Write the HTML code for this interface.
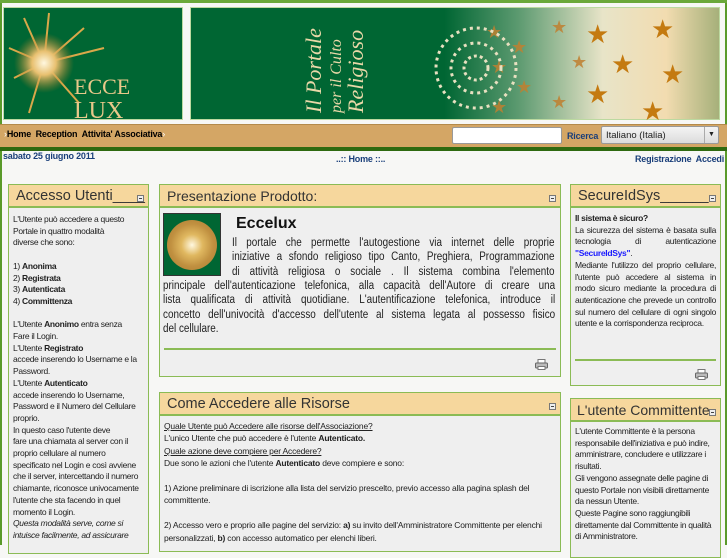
<!DOCTYPE html>
<html><head><meta charset="utf-8"><style>
*{margin:0;padding:0;box-sizing:border-box}
body{width:727px;height:545px;overflow:hidden;background:#f7f7f5;font-family:"Liberation Sans",sans-serif;position:relative}
.abs{position:absolute}
.top{left:0;top:0;width:727px;height:3px;background:#6aa83a}
.ban{background:#006633;border:1px solid #bcd9a0}
.nav{left:0;top:124px;width:727px;height:23px;background:#d4a665;border-top:1px solid #b48a4a}
.navline{left:0;top:147px;width:727px;height:4px;background:#2f6a10}
.nav b{font-size:9px;color:#1a1a1a}
.lnk{font-size:9px;font-weight:bold;color:#1a3f7a;white-space:nowrap;letter-spacing:-0.2px}
.panel{border:1px solid #8bbb55;background:#efefef;overflow:hidden}
.ph{background:#f6d79d;border-bottom:2px solid #8bbb55;height:23px;color:#333;font-size:14.5px;padding:3px 0 0 7px;position:relative;white-space:nowrap}
.mn{position:absolute;right:4px;bottom:4px;width:7px;height:7px;border:1px solid #777;background:#eee}
.mn:after{content:"";position:absolute;left:1px;top:2px;width:3px;height:1px;background:#444}
.sm{font-size:8.5px;line-height:11.7px;color:#222;letter-spacing:-0.3px}
.md{position:absolute;font-size:11.5px;line-height:14.4px;color:#222;transform:scaleX(.86);transform-origin:0 0}
.md div{text-align:justify;text-align-last:justify;white-space:nowrap}
.md div.l{text-align-last:left}
.prn{width:13px;height:11px}
</style></head><body>
<div class="abs" style="left:0;top:0;width:2px;height:545px;background:#5a9a2a"></div>
<div class="abs" style="right:0;top:0;width:2px;height:545px;background:#5a9a2a"></div>
<div class="abs top"></div>
<div class="abs ban" style="left:3px;top:7px;width:180px;height:113px">
<svg width="180" height="113" style="position:absolute;left:0;top:0">
<defs><radialGradient id="g"><stop offset="0" stop-color="#fff8e0"/><stop offset=".4" stop-color="#e8c070"/><stop offset="1" stop-color="#b07a20" stop-opacity="0"/></radialGradient></defs>
<g stroke="#d9a84a" stroke-width="2">
<line x1="40" y1="55" x2="20" y2="10"/><line x1="40" y1="55" x2="80" y2="20"/><line x1="40" y1="55" x2="100" y2="40"/><line x1="40" y1="55" x2="10" y2="70"/><line x1="40" y1="55" x2="25" y2="105"/><line x1="40" y1="55" x2="75" y2="95"/><line x1="40" y1="55" x2="45" y2="5"/><line x1="40" y1="55" x2="5" y2="40"/></g>
<circle cx="40" cy="55" r="30" fill="url(#g)"/>
<text x="70" y="86" font-family="Liberation Serif" font-size="22" fill="#e8c88a">ECCE</text>
<text x="70" y="110" font-family="Liberation Serif" font-size="24" fill="#e8c88a">LUX</text>
</svg></div>
<div class="abs ban" style="left:190px;top:7px;width:530px;height:113px;background:linear-gradient(90deg,#006633 0,#006633 48%,#5c9a70 62%,#e8e4c8 78%,#f2dcb0 90%,#a6b07a 100%)">
<svg width="530" height="113" style="position:absolute;left:0;top:0">
<g font-family="Liberation Serif" font-style="italic" fill="#e8d8a8">
<text transform="translate(130,105) rotate(-90)" font-size="22">Il Portale</text>
<text transform="translate(150,105) rotate(-90)" font-size="16">per il Culto</text>
<text transform="translate(172,105) rotate(-90)" font-size="22">Religioso</text></g>
<g fill="#c08030" opacity=".85" font-size="18">
<text x="295" y="30">★</text><text x="320" y="45">★</text><text x="300" y="65">★</text><text x="325" y="85">★</text><text x="300" y="105">★</text>
<text x="360" y="25">★</text><text x="380" y="60">★</text><text x="360" y="100">★</text></g>
<g fill="#c47a10" font-size="26"><text x="395" y="35">★</text><text x="420" y="65">★</text><text x="395" y="95">★</text><text x="460" y="30">★</text><text x="470" y="75">★</text><text x="450" y="112">★</text></g>
<circle cx="285" cy="60" r="40" fill="none" stroke="#e8e0c0" stroke-width="3" stroke-dasharray="3 4"/>
<circle cx="285" cy="60" r="25" fill="none" stroke="#e8e0c0" stroke-width="3" stroke-dasharray="3 4"/>
<circle cx="285" cy="60" r="12" fill="none" stroke="#e8e0c0" stroke-width="3" stroke-dasharray="3 3"/>
</svg></div>
<div class="abs nav"></div>
<div class="abs navline"></div>
<div class="abs" style="left:4px;top:129px;font-size:9px;letter-spacing:-0.2px"><span style="color:#fff">›</span><b>Home&nbsp; Reception&nbsp; Attivita' Associativa</b><span style="color:#fff">›</span></div>
<div class="abs" style="left:452px;top:127px;width:110px;height:17px;background:#fff;border:1px solid #999;border-radius:2px"></div>
<div class="abs lnk" style="left:567px;top:131px">Ricerca</div>
<div class="abs" style="left:601px;top:126px;width:118px;height:18px;background:linear-gradient(#f4f4f4,#dcdcdc);border:1px solid #999;border-radius:2px;font-size:9.5px;padding:3px 0 0 4px;color:#222">Italiano (Italia)<span style="position:absolute;right:0;top:0;width:14px;height:16px;border-left:1px solid #aaa;font-size:7px;text-align:center;line-height:16px">▼</span></div>
<div class="abs lnk" style="left:3px;top:151px">sabato 25 giugno 2011</div>
<div class="abs lnk" style="left:336px;top:154px">..:: Home ::..</div>
<div class="abs lnk" style="right:3px;top:154px">Registrazione&nbsp; Accedi</div>

<div class="abs panel" style="left:8px;top:184px;width:141px;height:370px">
<div class="ph">Accesso Utenti____<span class="mn"></span></div>
<div class="sm" style="padding:6px 4px;white-space:nowrap">L'Utente può accedere a questo<br>Portale in quattro modalità<br>diverse che sono:<br><br>1) <b>Anonima</b><br>2) <b>Registrata</b><br>3) <b>Autenticata</b><br>4) <b>Committenza</b><br><br>L'Utente <b>Anonimo</b> entra senza<br>Fare il Login.<br>L'Utente <b>Registrato</b><br>accede inserendo lo Username e la<br>Password.<br>L'Utente <b>Autenticato</b><br>accede inserendo lo Username,<br>Password e il Numero del Cellulare<br>proprio.<br>In questo caso l'utente deve<br>fare una chiamata al server con il<br>proprio cellulare al numero<br>specificato nel Login e così avviene<br>che il server, intercettando il numero<br>chiamante, riconosce univocamente<br>l'utente che sta facendo in quel<br>momento il Login.<br><i>Questa modalità serve, come si<br>intuisce facilmente, ad assicurare</i></div></div>

<div class="abs panel" style="left:159px;top:184px;width:402px;height:193px">
<div class="ph" style="font-size:14px">Presentazione Prodotto:<span class="mn"></span></div>
<div class="abs" style="left:3px;top:28px;width:58px;height:63px;background:#006633;border:1px solid #333"><div style="position:absolute;left:3px;top:6px;width:50px;height:50px;border-radius:50%;background:radial-gradient(#fff8e0 0,#e0b860 30%,#c09040 60%,#a87a30 100%)"></div></div>
<div class="abs" style="left:76px;top:30px;font-size:16px;font-weight:bold;color:#111">Eccelux</div>
<div class="md" style="left:72px;top:51px;width:375px">
<div>Il portale che permette l'autogestione via internet delle proprie</div>
<div>iniziative a sfondo religioso tipo Canto, Preghiera, Programmazione</div>
<div>di attività religiosa o sociale . Il sistema combina l'elemento</div></div>
<div class="md" style="left:3px;top:94px;width:456px">
<div>principale dell'autenticazione telefonica, alla capacità dell'Autore di creare una</div>
<div>lista qualificata di attività quotidiane. L'autentificazione telefonica, introduce il</div>
<div>concetto dell'univocità d'accesso dell'utente al sistema legata al possesso fisico</div>
<div class="l">del cellulare.</div></div>
<div style="position:absolute;left:4px;right:4px;top:163px;height:2px;background:#8bbb55"></div>
<svg class="prn abs" style="right:12px;top:174px" viewBox="0 0 13 11"><rect x="3" y="0.5" width="7" height="4" fill="#fff" stroke="#777"/><rect x="0.5" y="4" width="12" height="5" rx="1" fill="#bbb" stroke="#666"/><rect x="3" y="7.5" width="7" height="3" fill="#fff" stroke="#777"/></svg></div>

<div class="abs panel" style="left:159px;top:392px;width:402px;height:160px">
<div class="ph">Come Accedere alle Risorse<span class="mn"></span></div>
<div class="sm" style="padding:4px 4px;line-height:12.4px;letter-spacing:-0.2px">
<u>Quale Utente può Accedere alle risorse dell'Associazione?</u><br>L'unico Utente che può accedere è l'utente <b>Autenticato.</b><br><u>Quale azione deve compiere per Accedere?</u><br>Due sono le azioni che l'utente <b>Autenticato</b> deve compiere e sono:<br><br>1) Azione preliminare di iscrizione alla lista del servizio prescelto, previo accesso alla pagina splash del committente.<br><br>2) Accesso vero e proprio alle pagine del servizio: <b>a)</b> su invito dell'Amministratore Committente per elenchi personalizzati, <b>b)</b> con accesso automatico per elenchi liberi.</div></div>

<div class="abs panel" style="left:570px;top:184px;width:151px;height:202px">
<div class="ph">SecureIdSys______<span class="mn"></span></div>
<div class="sm" style="padding:5px 4px;text-align:justify"><b>Il sistema è sicuro?</b><br>La sicurezza del sistema è basata sulla tecnologia di autenticazione <b style="color:#1a1aff">"SecureIdSys"</b>.<br>Mediante l'utilizzo del proprio cellulare, l'utente può accedere al sistema in modo sicuro mediante la procedura di autenticazione che prevede un controllo sul numero del cellulare di ogni singolo utente e la corrispondenza reciproca.</div>
<div style="position:absolute;left:4px;right:4px;top:174px;height:2px;background:#8bbb55"></div>
<svg class="prn abs" style="right:12px;top:184px" viewBox="0 0 13 11"><rect x="3" y="0.5" width="7" height="4" fill="#fff" stroke="#777"/><rect x="0.5" y="4" width="12" height="5" rx="1" fill="#bbb" stroke="#666"/><rect x="3" y="7.5" width="7" height="3" fill="#fff" stroke="#777"/></svg></div>

<div class="abs panel" style="left:570px;top:398px;width:151px;height:160px">
<div class="ph" style="font-size:14px;padding-left:6px">L'utente Committente<span class="mn"></span></div>
<div class="sm" style="padding:4px 4px">L'utente Committente è la persona responsabile dell'iniziativa e può indire, amministrare, concludere e utilizzare i risultati.<br>Gli vengono assegnate delle pagine di questo Portale non visibili direttamente da nessun Utente.<br>Queste Pagine sono raggiungibili direttamente dal Committente in qualità di Amministratore.</div></div>
</body></html>
